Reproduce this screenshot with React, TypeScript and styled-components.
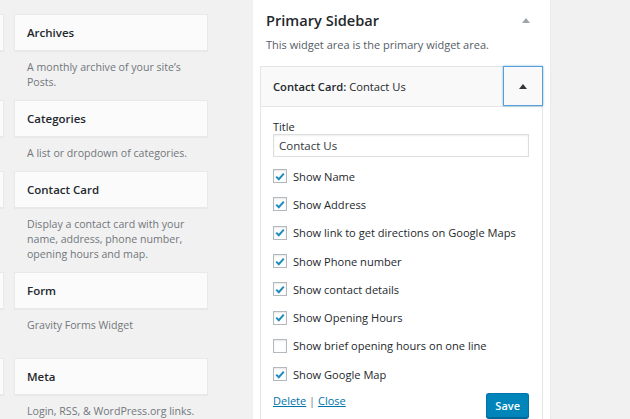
import React from "react";
import styled, { createGlobalStyle, css } from "styled-components";

const Global = createGlobalStyle`
  html, body { margin: 0; padding: 0; background: #f1f1f1; }
  body { font-family: "Open Sans", "Noto Sans", sans-serif; color: #23282d; }
`;

const Page = styled.div`
  display: flex;
  width: 630px;
  height: 419px;
  overflow: hidden;
  background: #f1f1f1;
`;

const LeftArea = styled.div`
  width: 253px;
  flex: none;
  overflow: hidden;
`;

const Columns = styled.div`
  display: flex;
  gap: 10px;
  margin-left: -190px;
  padding-top: 14px;
`;

const Column = styled.div<{ $ghost?: boolean }>`
  width: 194px;
  flex: none;
  display: flex;
  flex-direction: column;
  ${(p) =>
    p.$ghost &&
    css`
      span {
        visibility: hidden;
      }
    `}
`;

const WidgetCard = styled.div`
  height: 37px;
  box-sizing: border-box;
  background: #fbfbfb;
  border: 1px solid #e9e9e9;
  box-shadow: 0 1px 1px rgba(0, 0, 0, 0.03);
  padding: 0 12px;
  display: flex;
  align-items: center;
  font-size: 11.5px;
  font-weight: 600;
  color: #23282d;
`;

const Desc = styled.p<{ $extra?: number }>`
  margin: 0;
  padding: 9px 13px ${(p) => 10 + (p.$extra ?? 0)}px;
  font-size: 10.6px;
  line-height: 15px;
  color: #72777c;
`;

const Panel = styled.section`
  width: 297px;
  flex: none;
  background: #fff;
  box-sizing: border-box;
  padding: 0 7px;
`;

const PanelHead = styled.div`
  display: flex;
  align-items: center;
  justify-content: space-between;
  padding: 10px 13px 0 6px;
`;

const PanelTitle = styled.h2`
  margin: 0;
  font-size: 14.6px;
  line-height: 20px;
  font-weight: 600;
  color: #23282d;
`;

const PanelDesc = styled.p`
  margin: 0;
  padding: 7px 6px 14px;
  font-size: 11px;
  line-height: 15px;
  color: #555d66;
`;

const WidgetBox = styled.div`
  border: 1px solid #e5e5e5;
  box-shadow: 0 1px 1px rgba(0, 0, 0, 0.04);
  background: #fff;
`;

const WidgetHeader = styled.div`
  display: flex;
  align-items: center;
  height: 39px;
  background: #f9f9f9;
  border-bottom: 1px solid #e5e5e5;
`;

const WidgetTitle = styled.div`
  flex: 1;
  padding-left: 12px;
  font-size: 11.2px;
  color: #23282d;
  b {
    font-weight: 600;
  }
`;

const ToggleButton = styled.button`
  width: 40px;
  height: 40px;
  margin: -1px -1px 0 0;
  align-self: flex-start;
  box-sizing: border-box;
  border: 1px solid #5b9dd9;
  box-shadow: 0 0 2px rgba(30, 140, 190, 0.6);
  background: transparent;
  display: flex;
  align-items: center;
  justify-content: center;
  padding: 0;
`;

const WidgetBody = styled.div`
  padding: 12px 13px 20px 12px;
`;

const FieldLabel = styled.label`
  display: block;
  font-size: 11px;
  line-height: 15px;
  color: #23282d;
`;

const TextInput = styled.input`
  display: block;
  width: 100%;
  box-sizing: border-box;
  height: 23px;
  margin-top: 0;
  border: 1px solid #ddd;
  box-shadow: inset 0 1px 2px rgba(0, 0, 0, 0.07);
  padding: 0 5px;
  font-family: inherit;
  font-size: 11.5px;
  color: #32373c;
  background: #fff;
  outline: none;
`;

const Options = styled.div`
  margin-top: 5px;
  display: flex;
  flex-direction: column;
`;

const OptionRow = styled.label`
  height: 28.3px;
  display: flex;
  align-items: center;
  gap: 6px;
  font-size: 11.1px;
  color: #23282d;
`;

const Box = styled.span`
  width: 14px;
  height: 14px;
  box-sizing: border-box;
  border: 1px solid #b4b9be;
  box-shadow: inset 0 1px 2px rgba(0, 0, 0, 0.1);
  background: #fff;
  display: flex;
  align-items: center;
  justify-content: center;
  flex: none;
`;

const Footer = styled.div`
  display: flex;
  justify-content: space-between;
  align-items: flex-start;
  margin-top: 5px;
`;

const Links = styled.div`
  font-size: 11px;
  line-height: 15px;
  color: #72777c;
  a {
    color: #0073aa;
    text-decoration: underline;
  }
`;

const SaveButton = styled.button`
  height: 25px;
  padding: 0 8px;
  border-radius: 3px;
  border: 1px solid #0073aa;
  border-bottom-color: #006799;
  background: #0085ba;
  box-shadow: 0 1px 0 #006799;
  color: #fff;
  font-family: inherit;
  font-size: 11px;
  font-weight: 600;
`;

const Rest = styled.div`
  flex: 1;
  background: #f1f1f1;
  box-shadow: inset 1px 0 1px rgba(0, 0, 0, 0.03);
`;

type Item = { title: string; desc: string; extra?: number };

const items: Item[] = [
  { title: "Archives", desc: "A monthly archive of your site’s Posts." },
  { title: "Categories", desc: "A list or dropdown of categories." },
  {
    title: "Contact Card",
    desc: "Display a contact card with your name, address, phone number, opening hours and map.",
  },
  { title: "Form", desc: "Gravity Forms Widget", extra: 15 },
  { title: "Meta", desc: "Login, RSS, & WordPress.org links." },
];

const options: [string, boolean][] = [
  ["Show Name", true],
  ["Show Address", true],
  ["Show link to get directions on Google Maps", true],
  ["Show Phone number", true],
  ["Show contact details", true],
  ["Show Opening Hours", true],
  ["Show brief opening hours on one line", false],
  ["Show Google Map", true],
];

const Triangle = ({ color }: { color: string }) => (
  <svg width="8" height="5" viewBox="0 0 8 5">
    <path d="M0 5 L4 0 L8 5 Z" fill={color} />
  </svg>
);

const Check = () => (
  <svg width="10" height="9" viewBox="0 0 10 9">
    <path d="M1.2 4.6 L3.8 7.2 L8.8 1.6" fill="none" stroke="#1e8cbe" strokeWidth="2" />
  </svg>
);

const WidgetColumn = ({ list, ghost }: { list: Item[]; ghost?: boolean }) => (
  <Column $ghost={ghost} aria-hidden={ghost}>
    {list.map((it) => (
      <React.Fragment key={it.title}>
        <WidgetCard>
          <span>{it.title}</span>
        </WidgetCard>
        <Desc $extra={it.extra}>
          <span>{it.desc}</span>
        </Desc>
      </React.Fragment>
    ))}
  </Column>
);

export default function App() {
  return (
    <>
      <Global />
      <Page>
        <LeftArea>
          <Columns>
            <WidgetColumn list={items} ghost />
            <WidgetColumn list={items} />
          </Columns>
        </LeftArea>
        <Panel>
          <PanelHead>
            <PanelTitle>Primary Sidebar</PanelTitle>
            <Triangle color="#a0a5aa" />
          </PanelHead>
          <PanelDesc>This widget area is the primary widget area.</PanelDesc>
          <WidgetBox>
            <WidgetHeader>
              <WidgetTitle>
                <b>Contact Card:</b> Contact Us
              </WidgetTitle>
              <ToggleButton aria-label="Toggle">
                <Triangle color="#32373c" />
              </ToggleButton>
            </WidgetHeader>
            <WidgetBody>
              <FieldLabel>Title</FieldLabel>
              <TextInput defaultValue="Contact Us" />
              <Options>
                {options.map(([label, on]) => (
                  <OptionRow key={label}>
                    <Box>{on && <Check />}</Box>
                    {label}
                  </OptionRow>
                ))}
              </Options>
              <Footer>
                <Links>
                  <a href="#">Delete</a> | <a href="#">Close</a>
                </Links>
                <SaveButton>Save</SaveButton>
              </Footer>
            </WidgetBody>
          </WidgetBox>
        </Panel>
        <Rest />
      </Page>
    </>
  );
}
